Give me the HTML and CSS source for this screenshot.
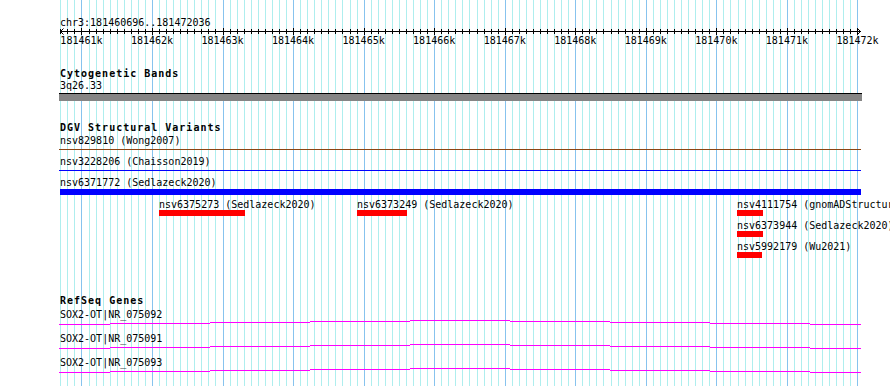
FILE: index.html
```html
<!DOCTYPE html>
<html lang="en">
<head>
<meta charset="utf-8">
<title>chr3:181460696..181472036</title>
<link rel="stylesheet" href="styles.css">
</head>
<body>
<div class="page">
  <svg class="grid" id="grid" width="890" height="386" aria-hidden="true"></svg>
  <div class="content">
    <div class="ruler">
      <div class="loc">chr3:181460696..181472036</div>
      <svg class="scale" id="scale" width="802" height="7" aria-hidden="true">
        <line class="axis" x1="0" y1="3.5" x2="801" y2="3.5"/>
        <path class="arrow" d="M3.5 0.5 L0.5 3.5 L3.5 6.5"/>
        <path class="arrow" d="M797.5 0.5 L800.5 3.5 L797.5 6.5"/>
      </svg>
      <div class="ticklabels">
        <span class="tick" style="left:21.45px">181461k</span>
        <span class="tick" style="left:91.99px">181462k</span>
        <span class="tick" style="left:162.54px">181463k</span>
        <span class="tick" style="left:233.09px">181464k</span>
        <span class="tick" style="left:303.63px">181465k</span>
        <span class="tick" style="left:374.18px">181466k</span>
        <span class="tick" style="left:444.73px">181467k</span>
        <span class="tick" style="left:515.27px">181468k</span>
        <span class="tick" style="left:585.82px">181469k</span>
        <span class="tick" style="left:656.37px">181470k</span>
        <span class="tick" style="left:726.91px">181471k</span>
        <span class="tick" style="left:797.46px">181472k</span>
      </div>
    </div>

    <section class="track cyto">
      <h2 class="track-title">Cytogenetic Bands</h2>
      <div class="label band-label">3q26.33</div>
      <div class="band"></div>
    </section>

    <section class="track dgv">
      <h2 class="track-title">DGV Structural Variants</h2>
      <div class="full-feature">
        <div class="label">nsv829810 (Wong2007)</div>
        <div class="thin-line brown"></div>
      </div>
      <div class="full-feature gap">
        <div class="label">nsv3228206 (Chaisson2019)</div>
        <div class="thin-line blue"></div>
      </div>
      <div class="full-feature gap">
        <div class="label">nsv6371772 (Sedlazeck2020)</div>
        <div class="thick-bar"></div>
      </div>
      <div class="stack">
        <div class="stack-row">
          <div class="feat" style="left:99px">
            <div class="label">nsv6375273 (Sedlazeck2020)</div>
            <div class="red-bar" style="width:86px"></div>
          </div>
          <div class="feat" style="left:297px">
            <div class="label">nsv6373249 (Sedlazeck2020)</div>
            <div class="red-bar" style="width:50px"></div>
          </div>
          <div class="feat" style="left:677px">
            <div class="label">nsv4111754 (gnomADStructuralVariants)</div>
            <div class="red-bar" style="width:26px"></div>
          </div>
        </div>
        <div class="stack-row">
          <div class="feat" style="left:677px">
            <div class="label">nsv6373944 (Sedlazeck2020)</div>
            <div class="red-bar" style="width:26px"></div>
          </div>
        </div>
        <div class="stack-row">
          <div class="feat" style="left:677px">
            <div class="label">nsv5992179 (Wu2021)</div>
            <div class="red-bar" style="width:25px"></div>
          </div>
        </div>
      </div>
    </section>

    <section class="track genes">
      <h2 class="track-title">RefSeq Genes</h2>
      <div class="gene">
        <div class="label">SOX2-OT|NR_075092</div>
        <svg class="gene-line" width="803" height="5" aria-hidden="true"><path d="M0 4.5H51M51 3.5H151M151 2.5H251M251 1.5H351M351 0.5H451M451 1.5H551M551 2.5H651M651 3.5H751M751 4.5H802"/></svg>
      </div>
      <div class="gene">
        <div class="label">SOX2-OT|NR_075091</div>
        <svg class="gene-line" width="803" height="5" aria-hidden="true"><path d="M0 4.5H51M51 3.5H151M151 2.5H251M251 1.5H351M351 0.5H451M451 1.5H551M551 2.5H651M651 3.5H751M751 4.5H802"/></svg>
      </div>
      <div class="gene">
        <div class="label">SOX2-OT|NR_075093</div>
        <svg class="gene-line" width="803" height="5" aria-hidden="true"><path d="M0 4.5H51M51 3.5H151M151 2.5H251M251 1.5H351M351 0.5H451M451 1.5H551M551 2.5H651M651 3.5H751M751 4.5H802"/></svg>
      </div>
    </section>
  </div>
</div>
<script src="script.js"></script>
</body>
</html>
```

FILE: styles.css
```css
html, body {
  margin: 0;
  padding: 0;
  background: #ffffff;
  overflow: hidden;
}

body {
  font-family: "DejaVu Sans Mono", "Liberation Mono", monospace;
  font-size: 10px;
  line-height: 13px;
  color: #000000;
}

.page {
  position: relative;
  width: 890px;
  height: 386px;
  overflow: hidden;
  box-sizing: border-box;
  padding: 16px 0 0 60px;
}

.grid {
  position: absolute;
  left: 0;
  top: 0;
  z-index: 0;
  shape-rendering: crispEdges;
}

.grid line {
  stroke: #aeeeee;
  stroke-width: 1;
}

.grid line.major {
  stroke: #87c3ee;
}

.content {
  position: relative;
  z-index: 1;
}

.label {
  white-space: nowrap;
}

/* ruler */
.loc {
  height: 12px;
  white-space: nowrap;
}

.scale {
  display: block;
  overflow: visible;
}

.scale .axis,
.scale .tickmark {
  stroke: #000000;
  stroke-width: 1;
  shape-rendering: crispEdges;
}

.scale .arrow {
  fill: none;
  stroke: #000000;
  stroke-width: 1;
}

.ticklabels {
  position: relative;
  height: 13px;
  margin-top: -1px;
}

.tick {
  position: absolute;
  top: 0;
  transform: translateX(-50%);
  white-space: nowrap;
}

/* tracks */
.track-title {
  margin: 0;
  font-size: 10px;
  font-weight: bold;
  letter-spacing: 1px;
  line-height: 13px;
  white-space: nowrap;
}

.cyto {
  margin-top: 20px;
}

.band-label {
  margin-top: -1px;
}

.band {
  margin: 1px 0 0 -1px;
  width: 803px;
  height: 7px;
  background: #858585;
  border-top: 1px solid #000000;
}

.dgv {
  margin-top: 20px;
}

.full-feature.gap {
  margin-top: 5px;
}

.thin-line {
  margin: 2px 0 0 -1px;
  width: 802px;
  height: 1px;
}

.thin-line.brown {
  background: #8b4513;
}

.thin-line.blue {
  background: #0000ff;
}

.thick-bar {
  width: 801px;
  height: 6px;
  background: #0000ff;
}

.stack {
  padding-top: 3px;
}

.stack-row {
  position: relative;
  height: 21px;
}

.feat {
  position: absolute;
  top: 0;
}

.red-bar {
  margin-top: -1px;
  height: 6px;
  background: #ff0000;
}

.genes {
  margin-top: 33px;
}

.gene {
  margin-top: 1px;
  margin-bottom: 7px;
}

.gene-line {
  display: block;
  margin: -1px 0 0 -1px;
  shape-rendering: crispEdges;
}

.gene-line path {
  fill: none;
  stroke: #ff00ff;
  stroke-width: 1;
}
```

FILE: script.js
```js
(function () {
  var START = 181460696;
  var END = 181472036;
  var WIDTH = 800;
  var X0 = 60;
  var NS = "http://www.w3.org/2000/svg";

  function sx(bp) {
    return X0 + (bp - START) * WIDTH / (END - START);
  }

  var grid = document.getElementById("grid");
  var scale = document.getElementById("scale");
  var first = Math.ceil(START / 100) * 100;

  for (var bp = first; bp <= END; bp += 100) {
    var x = Math.round(sx(bp)) + 0.5;
    var major = bp % 1000 === 0;

    var gl = document.createElementNS(NS, "line");
    gl.setAttribute("x1", x);
    gl.setAttribute("x2", x);
    gl.setAttribute("y1", 0);
    gl.setAttribute("y2", 386);
    if (major) gl.setAttribute("class", "major");
    grid.appendChild(gl);

    var tx = x - X0;
    var tl = document.createElementNS(NS, "line");
    tl.setAttribute("class", "tickmark");
    tl.setAttribute("x1", tx);
    tl.setAttribute("x2", tx);
    tl.setAttribute("y1", major ? 0 : 1);
    tl.setAttribute("y2", major ? 7 : 6);
    scale.appendChild(tl);
  }
})();
```
